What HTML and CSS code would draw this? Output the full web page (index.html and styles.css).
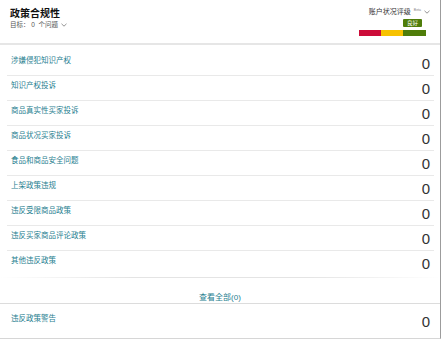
FILE: index.html
```html
<!DOCTYPE html>
<html lang="zh-CN">
<head>
    <meta charset="UTF-8">
    <meta name="viewport" content="width=device-width, initial-scale=1.0">
    <title>政策合规性</title>
    <link rel="stylesheet" href="styles.css">
</head>
<body>
<div class="card">
    <div class="card-head">
        <div class="head-left">
            <h2 class="title">政策合规性</h2>
            <div class="target">
                <span>目标：&nbsp;0&nbsp;&nbsp;个问题</span>
                <svg class="chev" width="6" height="4" viewBox="0 0 6 4"><path d="M0.5 0.8 L3 3.2 L5.5 0.8" fill="none" stroke="#888" stroke-width="0.9"/></svg>
            </div>
        </div>
        <div class="rating">
            <div class="rating-label">
                <span>账户状况评级</span><span class="beta">Beta</span>
                <svg class="chev" width="6" height="4" viewBox="0 0 6 4"><path d="M0.5 0.8 L3 3.2 L5.5 0.8" fill="none" stroke="#888" stroke-width="0.9"/></svg>
            </div>
            <div class="badge">良好</div>
            <div class="meter">
                <span class="seg seg-red"></span>
                <span class="seg seg-yellow"></span>
                <span class="seg seg-green"></span>
            </div>
        </div>
    </div>

    <ul class="metrics">
        <li class="metric"><a class="metric-name" href="#">涉嫌侵犯知识产权</a><span class="metric-count">0</span></li>
        <li class="metric"><a class="metric-name" href="#">知识产权投诉</a><span class="metric-count">0</span></li>
        <li class="metric"><a class="metric-name" href="#">商品真实性买家投诉</a><span class="metric-count">0</span></li>
        <li class="metric"><a class="metric-name" href="#">商品状况买家投诉</a><span class="metric-count">0</span></li>
        <li class="metric"><a class="metric-name" href="#">食品和商品安全问题</a><span class="metric-count">0</span></li>
        <li class="metric"><a class="metric-name" href="#">上架政策违规</a><span class="metric-count">0</span></li>
        <li class="metric"><a class="metric-name" href="#">违反受限商品政策</a><span class="metric-count">0</span></li>
        <li class="metric"><a class="metric-name" href="#">违反买家商品评论政策</a><span class="metric-count">0</span></li>
        <li class="metric"><a class="metric-name" href="#">其他违反政策</a><span class="metric-count">0</span></li>
    </ul>

    <div class="view-all">
        <a href="#">查看全部(0)</a>
    </div>

    <div class="metric metric-warning">
        <a class="metric-name" href="#">违反政策警告</a><span class="metric-count">0</span>
    </div>
</div>
</body>
</html>
```

FILE: styles.css
```css
body {
    margin: 0;
    background: #fff;
    font-family: "Liberation Sans", "Noto Sans CJK SC", sans-serif;
    color: #333;
}

.card {
    width: 441px;
    height: 339px;
    box-sizing: border-box;
    background: white;
    border-right: 1px solid #9c9c9c;
    border-bottom: 1px solid #d6d6d6;
}

.card-head {
    display: flex;
    justify-content: space-between;
    height: 43px;
    border-bottom: 2px solid #e6e6e6;
}

.head-left {
    padding: 8px 0 0 10px;
}

.title {
    margin: 0;
    font-size: 10px;
    line-height: 12px;
    font-weight: bold;
    color: #111;
}

.target {
    display: flex;
    align-items: center;
    font-size: 6.5px;
    line-height: 9px;
    color: #555;
}

.chev {
    margin-left: 3px;
}

.rating {
    display: flex;
    flex-direction: column;
    align-items: flex-end;
    padding: 7px 10px 0 0;
}

.rating-label {
    display: flex;
    align-items: center;
    font-size: 7px;
    line-height: 10px;
    color: #333;
}

.beta {
    font-size: 3.5px;
    color: #888;
    margin-left: 3px;
    align-self: flex-start;
    line-height: 6px;
}

.badge {
    margin: 2px 8px 0 0;
    width: 19px;
    height: 8px;
    background: #4f7d0a;
    color: white;
    font-size: 5.5px;
    line-height: 8px;
    text-align: center;
    border-radius: 1px;
}

.meter {
    display: flex;
    margin: 3px 4px 0 0;
}

.seg {
    display: block;
    width: 22px;
    height: 6px;
}

.seg-red {
    background: #cc0c39;
}

.seg-yellow {
    background: #f7c200;
}

.seg-green {
    width: 23px;
    background: #4f7d0a;
}

.metrics {
    list-style: none;
    margin: 0 6px 0 7px;
    padding: 6px 0 0;
}

.metric {
    display: flex;
    justify-content: space-between;
    align-items: flex-start;
    height: 24px;
    padding: 0 4px;
    border-bottom: 1px solid #e9e9e9;
}

.metrics .metric:last-child {
    border-bottom: none;
}

.metric-name {
    padding-top: 4.5px;
    font-size: 7.5px;
    line-height: 10px;
    color: #1f8090;
    text-decoration: none;
}

.metric-count {
    margin-top: 5px;
    font-size: 15px;
    line-height: 15px;
    color: #333;
}

.view-all {
    height: 27px;
    margin-top: 2px;
    box-sizing: border-box;
    padding-top: 9px;
    text-align: center;
    background:
        linear-gradient(to right, rgba(230, 230, 230, 0), #e4e4e4 30%, #e4e4e4 70%, rgba(230, 230, 230, 0)) top / 100% 1px no-repeat;
    border-bottom: 1px solid #dcdcdc;
}

.view-all a {
    font-size: 8px;
    line-height: 10px;
    color: #1f8090;
    text-decoration: none;
}

.metric-warning {
    height: 34px;
    margin: 0 6px 0 7px;
    border-bottom: none;
}

.metric-warning .metric-name {
    padding-top: 10px;
}

.metric-warning .metric-count {
    margin-top: 10px;
}
```
